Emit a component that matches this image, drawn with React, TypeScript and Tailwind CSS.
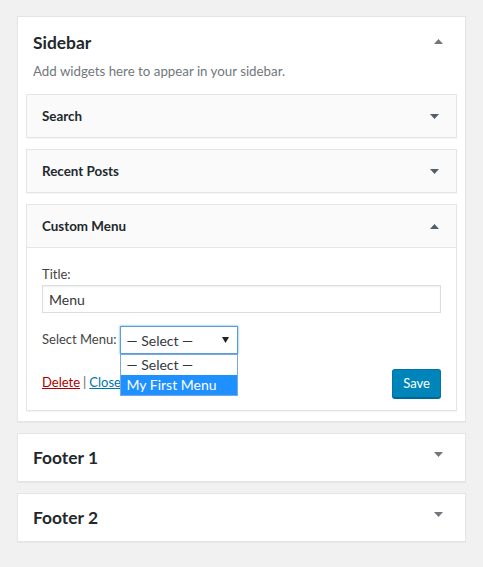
import { ReactNode } from "react";

const font = { fontFamily: 'Lato, "Open Sans", sans-serif' };

function Caret({ up = false, className = "" }: { up?: boolean; className?: string }) {
  return (
    <svg width="9" height="5" viewBox="0 0 9 5" className={className}>
      {up ? (
        <path d="M0 5 L4.5 0 L9 5 Z" fill="currentColor" />
      ) : (
        <path d="M0 0 L9 0 L4.5 5 Z" fill="currentColor" />
      )}
    </svg>
  );
}

function WidgetHeader({ title, up = false }: { title: string; up?: boolean }) {
  return (
    <div className="flex items-center justify-between h-[42px] pl-[15px] pr-[17px]">
      <span className="text-[13.4px] font-bold text-[#23282d] pt-[1px]">{title}</span>
      <Caret up={up} className="text-[#555d66]" />
    </div>
  );
}

function Widget({ title, children }: { title: string; children?: ReactNode }) {
  return (
    <div className="border border-[#e5e5e5] bg-[#fafafa] shadow-[0_1px_1px_rgba(0,0,0,0.04)]">
      <WidgetHeader title={title} up={!!children} />
      {children}
    </div>
  );
}

function Area({ title }: { title: string }) {
  return (
    <div className="bg-white border border-[#e5e5e5] shadow-[0_1px_1px_rgba(0,0,0,0.04)] h-[49px] flex items-center justify-between pl-[15px] pr-[22px]">
      <span className="text-[17.4px] font-bold text-[#23282d] leading-none">{title}</span>
      <Caret className="text-[#72777c] -mt-[6px]" />
    </div>
  );
}

export default function App() {
  return (
    <div className="min-h-screen bg-[#f1f1f1] px-[17px] pt-[16px]" style={font}>
      <div className="bg-white border border-[#e5e5e5] shadow-[0_1px_1px_rgba(0,0,0,0.04)] pb-[10px]">
        <div className="flex items-center justify-between pl-[15px] pr-[22px] pt-[14px]">
          <h2 className="text-[17.4px] font-bold text-[#23282d] leading-[24px]">Sidebar</h2>
          <Caret up className="text-[#72777c] -mt-[4px]" />
        </div>
        <p className="pl-[15px] pt-[6px] pb-[13px] text-[13.3px] text-[#72777c] leading-[20px]">
          Add widgets here to appear in your sidebar.
        </p>
        <div className="px-[8px] flex flex-col gap-[11px]">
          <Widget title="Search" />
          <Widget title="Recent Posts" />
          <Widget title="Custom Menu">
            <div className="bg-white border-t border-[#e5e5e5] px-[15px] pt-[18px] pb-[12px] text-[13px] text-[#444]">
              <label className="block leading-[16px] mb-[3px]">Title:</label>
              <div className="h-[28px] border border-[#ddd] shadow-[inset_0_1px_2px_rgba(0,0,0,0.07)] px-[6px] flex items-center text-[14px] text-[#32373c]">
                Menu
              </div>
              <div className="flex items-center mt-[13px] h-[28px]">
                <span className="mr-[3px]">Select Menu:</span>
                <div className="relative">
                  <div className="w-[118px] h-[28px] border border-[#5b9dd9] bg-white flex items-center justify-between pl-[6px] pr-[8px] text-[14px] text-[#32373c] shadow-[0_0_2px_rgba(30,140,190,0.8)]">
                    <span>— Select —</span>
                    <svg width="7" height="6" viewBox="0 0 7 6" className="text-[#222]">
                      <path d="M0 0 L7 0 L3.5 6 Z" fill="currentColor" />
                    </svg>
                  </div>
                  <div className="absolute left-0 top-[28px] w-[118px] border border-[#7aa7e0] bg-white text-[14px] z-10">
                    <div className="h-[20px] leading-[20px] pl-[6px] text-[#32373c]">— Select —</div>
                    <div className="h-[20px] leading-[20px] pl-[6px] bg-[#1e90ff] text-white">My First Menu</div>
                  </div>
                </div>
              </div>
              <div className="flex items-center justify-between mt-[14px]">
                <div className="flex items-center">
                  <a className="text-[#a00] underline">Delete</a>
                  <span className="mx-[3px] text-[#666]">|</span>
                  <a className="text-[#0073aa] underline">Close</a>
                </div>
                <button className="h-[29px] px-[10px] rounded-[3px] bg-[#0085ba] border border-[#0073aa] border-b-[#006799] shadow-[0_1px_0_#006799] text-white text-[13px] mt-[1px]">
                  Save
                </button>
              </div>
            </div>
          </Widget>
        </div>
      </div>
      <div className="mt-[11px] flex flex-col gap-[11px]">
        <Area title="Footer 1" />
        <Area title="Footer 2" />
      </div>
    </div>
  );
}
